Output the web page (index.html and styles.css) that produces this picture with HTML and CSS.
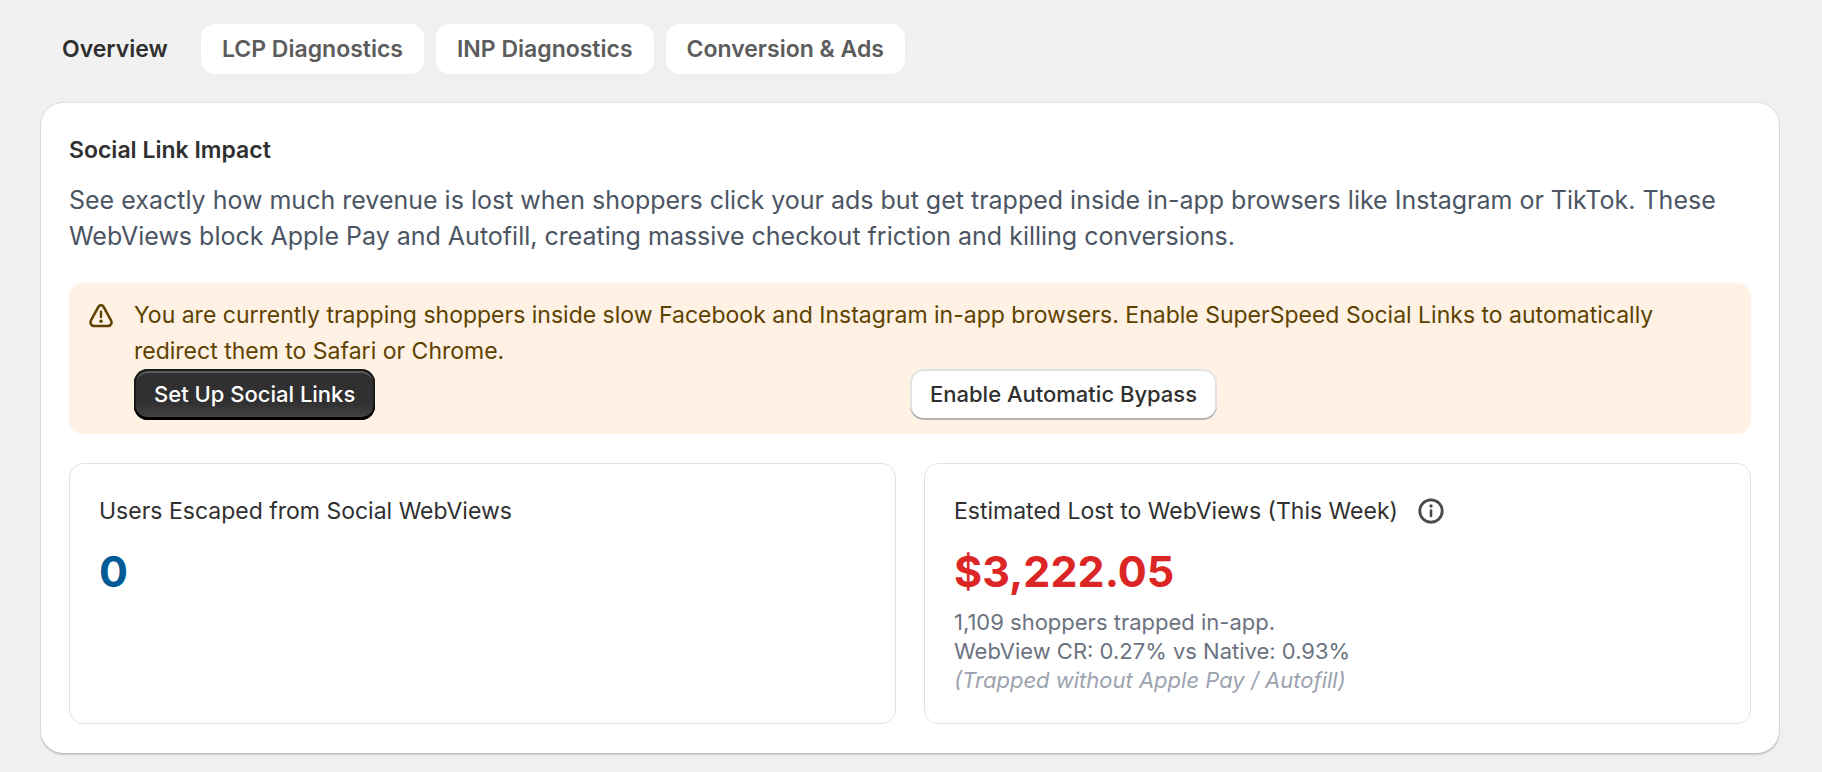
FILE: index.html
```
<!DOCTYPE html>
<html lang="en">
<head>
    <meta charset="UTF-8">
    <meta name="viewport" content="width=device-width, initial-scale=1.0">
    <title>Overview</title>
    <link rel="stylesheet" href="styles.css">
</head>
<body>
    <nav class="tabs">
        <button type="button" class="tab active">Overview</button>
        <button type="button" class="tab">LCP Diagnostics</button>
        <button type="button" class="tab">INP Diagnostics</button>
        <button type="button" class="tab">Conversion &amp; Ads</button>
    </nav>

    <main class="card">
        <h1>Social Link Impact</h1>
        <p class="description">See exactly how much revenue is lost when shoppers click your ads but get trapped inside in-app browsers like Instagram or TikTok. These WebViews block Apple Pay and Autofill, creating massive checkout friction and killing conversions.</p>

        <section class="banner">
            <svg class="banner-icon" viewBox="0 0 24 24" fill="none" stroke="currentColor" stroke-width="2.6" stroke-linecap="round" stroke-linejoin="round">
                <path d="M9.4 2.8c1.1-2.1 4.1-2.1 5.2 0l7.2 13.2c1.5 2.9 0.4 6-2.8 6H5c-3.2 0-4.3-3.1-2.8-6z"/>
                <path d="M12 7.6v5.4" stroke-width="2.4"/>
                <circle cx="12" cy="17.3" r="1.7" fill="currentColor" stroke="none"/>
            </svg>
            <div class="banner-content">
                <p>You are currently trapping shoppers inside slow Facebook and Instagram in-app browsers. Enable SuperSpeed Social Links to automatically redirect them to Safari or Chrome.</p>
                <div class="actions">
                    <button type="button" class="button primary">Set Up Social Links</button>
                    <button type="button" class="button">Enable Automatic Bypass</button>
                </div>
            </div>
        </section>

        <div class="stats">
            <section class="stat">
                <h2>Users Escaped from Social WebViews</h2>
                <p class="value escaped">0</p>
            </section>
            <section class="stat">
                <h2>Estimated Lost to WebViews (This Week)
                    <svg class="info-icon" viewBox="0 0 26 26" fill="none" stroke="currentColor" stroke-linecap="round">
                        <circle cx="13" cy="13" r="11.2" stroke-width="2.8"/>
                        <path d="M13 12.5v5.5" stroke-width="2.6"/>
                        <circle cx="13" cy="8" r="1.7" fill="currentColor" stroke="none"/>
                    </svg>
                </h2>
                <p class="value lost">$3,222.05</p>
                <p class="detail">1,109 shoppers trapped in-app.<br>
                    WebView CR: 0.27% vs Native: 0.93%<br>
                    <em>(Trapped without Apple Pay / Autofill)</em></p>
            </section>
        </div>
    </main>
</body>
</html>
```
FILE: styles.css
```
body {
    font-family: Inter, sans-serif;
    font-size: 23px;
    line-height: 36px;
    color: #303030;
    background-color: #f0f0f0;
    margin: 0;
    padding: 24px 43px 18px 41px;
}
h1, h2, p {
    margin: 0;
}
button {
    font-family: inherit;
    cursor: pointer;
}
.tabs {
    display: flex;
    gap: 12px;
    margin-bottom: 29px;
}
.tab {
    height: 50px;
    padding: 0 21px;
    border: none;
    border-radius: 14px;
    background: white;
    color: #5c5c5c;
    font-size: 23px;
    font-weight: 600;
}
.tab.active {
    background: #f1f1f1;
    color: #303030;
}
.card {
    padding: 29px 28px;
    background: white;
    border-radius: 22px;
    box-shadow: 0 0 1px 1px rgba(0, 0, 0, 0.07), 0 2px 2px rgba(0, 0, 0, 0.16);
}
h1 {
    font-size: 23px;
    font-weight: 600;
}
.description {
    margin: 14px 0 29px;
    font-size: 25px;
    color: #4b5563;
}
.banner {
    display: flex;
    gap: 21px;
    margin-bottom: 29px;
    padding: 14px 20px;
    border-radius: 14px;
    background: #fff1e3;
    color: #5e4200;
}
.banner-icon {
    flex: none;
    width: 24px;
    height: 24px;
    margin-top: 7px;
}
.banner-content {
    flex: 1;
}
.actions {
    display: grid;
    grid-template-columns: 1fr 1fr;
    justify-items: start;
    padding-right: 45px;
}
.button {
    height: 51px;
    padding: 0 20px 2px;
    border: none;
    border-radius: 14px;
    background: white;
    color: #303030;
    font-size: 22px;
    font-weight: 500;
    box-shadow: inset 0 -2px 0 #b5b5b5, inset 0 0 0 2px #e3e3e3;
}
.button.primary {
    background: linear-gradient(#303030 65%, #454545);
    color: white;
    box-shadow: inset 0 -3px 0 #000, inset 0 0 0 2px #1a1a1a, inset 0 3px 0 1px #5c5c5c;
}
.stats {
    display: grid;
    grid-template-columns: 1fr 1fr;
    gap: 28px;
}
.stat {
    padding: 29px 29px 28px;
    border: 1px solid #e3e3e3;
    border-radius: 14px;
}
h2 {
    display: flex;
    align-items: center;
    gap: 20px;
    font-size: 23px;
    font-weight: 400;
}
.info-icon {
    width: 26px;
    height: 26px;
    color: #4a4a4a;
}
.value {
    margin: 13px 0 8px;
    font-size: 43px;
    line-height: 58px;
    font-weight: 700;
}
.escaped {
    color: #005b96;
}
.lost {
    color: #dc2626;
}
.detail {
    font-size: 22px;
    line-height: 29px;
    color: #6b7280;
}
.detail em {
    color: #9ca3af;
}
```
